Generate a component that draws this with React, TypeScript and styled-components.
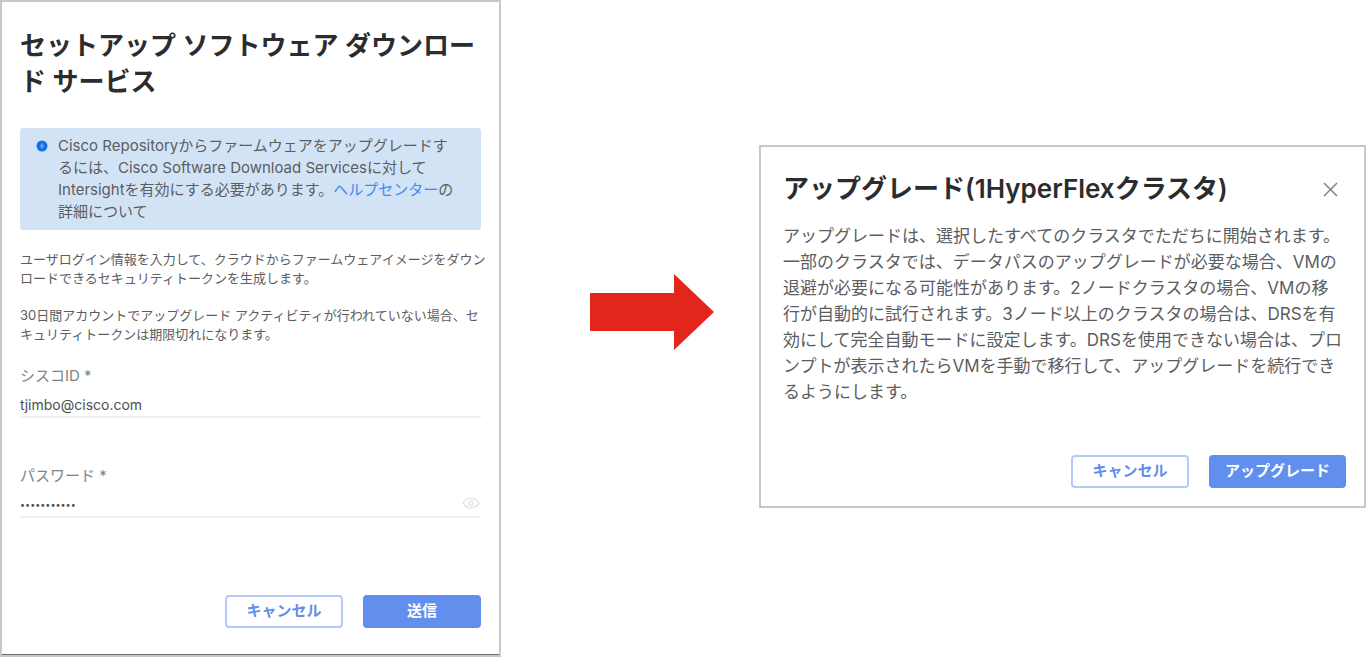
import React from "react";
import styled, { createGlobalStyle, css } from "styled-components";

const GlobalStyle = createGlobalStyle`
  *, *::before, *::after { box-sizing: border-box; }
  body {
    margin: 0;
    background: #fff;
    color: #5c5d5f;
    font-family: Inter, "Noto Sans CJK JP", sans-serif;
  }
  h2, p { margin: 0; }
`;

const Page = styled.main`
  display: grid;
  grid-template-columns: minmax(0, 501fr) minmax(0, 258fr) minmax(0, 607fr);
  align-items: start;
`;

const Card = styled.section`
  border: 2px solid #c8c8c8;
  background: #fff;
`;

const SetupCard = styled(Card)`
  padding: 26px 18px 27px;
  box-shadow: inset 0 -1px 0 #6b6b6b;
`;

const UpgradeCard = styled(Card)`
  margin-top: 145px;
  padding: 24px 18px 18px 22px;
`;

const Title = styled.h2`
  color: #2b2c2e;
  font-size: 26px;
  line-height: 36px;
  font-weight: 600;
  white-space: nowrap;
`;

const TitleRow = styled.div`
  display: flex;
  align-items: center;
  justify-content: space-between;
`;

const CloseButton = styled.button`
  display: flex;
  padding: 8px;
  border: 0;
  background: none;
  color: #808285;
`;

const Notice = styled.div`
  display: flex;
  gap: 10px;
  margin-top: 28px;
  padding: 7px 16px;
  border-radius: 3px;
  background: #d3e3f6;
  font-size: 15px;
  line-height: 22px;
  white-space: nowrap;
`;

const InfoIcon = styled.svg`
  flex: none;
  margin-top: 5px;
`;

const HelpLink = styled.a`
  color: #448ae8;
  text-decoration: none;
`;

const Copy = styled.p`
  margin-top: 18px;
  font-size: 13px;
  line-height: 19px;
  white-space: nowrap;

  ${Notice} + & { margin-top: 20px; }
`;

const Body = styled.p`
  margin-top: 16px;
  font-size: 17px;
  line-height: 26px;
  white-space: nowrap;
`;

const Field = styled.div`
  display: flex;
  flex-direction: column;
  margin-top: 20px;

  & + & { margin-top: 46px; }
`;

const Label = styled.label`
  color: #808285;
  font-size: 15px;
  line-height: 24px;
`;

const InputRow = styled.div`
  display: flex;
  align-items: flex-end;
  height: 30px;
  border-bottom: 2px solid #f0f0f0;
`;

const Input = styled.input`
  flex: 1;
  min-width: 0;
  height: 24px;
  padding: 0;
  border: 0;
  outline: 0;
  background: none;
  color: #4d4e50;
  font: ${(p) => (p.type === "password" ? "9px" : "14px")} Inter, "Noto Sans CJK JP", sans-serif;
`;

const RevealButton = styled.button`
  display: flex;
  padding: 0 1px 7px;
  border: 0;
  background: none;
  color: #e6e6e6;
`;

const Actions = styled.div<{ $gap: number }>`
  display: flex;
  justify-content: flex-end;
  gap: 20px;
  margin-top: ${(p) => p.$gap}px;
`;

const Button = styled.button<{ $primary?: boolean }>`
  min-width: 118px;
  height: 33px;
  padding: 0 14px 2px;
  border: 2px solid #b4cbfa;
  border-radius: 4px;
  background: #fff;
  color: #5f8eee;
  font: 700 15px/22px Inter, "Noto Sans CJK JP", sans-serif;
  white-space: nowrap;
  ${(p) =>
    p.$primary &&
    css`
      border-color: #5f8eee;
      background: #628fee;
      color: #fff;
    `}
`;

const Arrow = styled.svg`
  margin: 274px 0 0 44px;
  justify-self: center;
`;

export default function App() {
  return (
    <>
      <GlobalStyle />
      <Page lang="ja">
        <SetupCard>
          <Title>
            セットアップ ソフトウェア ダウンロー
            <br />ド サービス
          </Title>
          <Notice>
            <InfoIcon width="12" height="12" viewBox="0 0 12 12" aria-hidden="true">
              <circle cx="6" cy="6" r="5.5" fill="#176fe0" />
              <ellipse cx="6" cy="6" rx="1.3" ry="2" fill="#4f94ec" stroke="#8dbcf5" strokeWidth=".6" />
            </InfoIcon>
            <p>
              Cisco Repositoryからファームウェアをアップグレードす
              <br />るには、Cisco Software Download Servicesに対して
              <br />Intersightを有効にする必要があります。<HelpLink href="#help">ヘルプセンター</HelpLink>の
              <br />詳細について
            </p>
          </Notice>
          <Copy>
            ユーザログイン情報を入力して、クラウドからファームウェアイメージをダウン
            <br />ロードできるセキュリティトークンを生成します。
          </Copy>
          <Copy>
            30日間アカウントでアップグレード アクティビティが行われていない場合、セ
            <br />キュリティトークンは期限切れになります。
          </Copy>
          <Field>
            <Label htmlFor="cisco-id">シスコID *</Label>
            <InputRow>
              <Input id="cisco-id" type="text" defaultValue="tjimbo@cisco.com" />
            </InputRow>
          </Field>
          <Field>
            <Label htmlFor="password">パスワード *</Label>
            <InputRow>
              <Input id="password" type="password" defaultValue="hyperflex01" />
              <RevealButton type="button" aria-label="パスワードを表示">
                <svg width="18" height="12" viewBox="0 0 18 12" fill="none" stroke="currentColor" strokeWidth="1.5">
                  <path d="M1 6C3 2.6 5.700 1.200 9 1.200S15 2.600 17 6C15 9.400 12.300 10.800 9 10.800S3 9.400 1 6Z" />
                  <circle cx="9" cy="6" r="2.300" />
                </svg>
              </RevealButton>
            </InputRow>
          </Field>
          <Actions $gap={77}>
            <Button type="button">キャンセル</Button>
            <Button type="submit" $primary>送信</Button>
          </Actions>
        </SetupCard>

        <Arrow width="124" height="76" viewBox="0 0 124 76" aria-hidden="true">
          <path d="M0 19H84V0L124 38L84 76V57H0Z" fill="#e2261c" />
        </Arrow>

        <UpgradeCard>
          <TitleRow>
            <Title>アップグレード(1HyperFlexクラスタ)</Title>
            <CloseButton type="button" aria-label="閉じる">
              <svg width="15" height="15" viewBox="0 0 15 15" fill="none" stroke="currentColor" strokeWidth="1.5">
                <path d="M1 1L14 14M14 1L1 14" />
              </svg>
            </CloseButton>
          </TitleRow>
          <Body>
            アップグレードは、選択したすべてのクラスタでただちに開始されます。
            <br />一部のクラスタでは、データパスのアップグレードが必要な場合、VMの
            <br />退避が必要になる可能性があります。2ノードクラスタの場合、VMの移
            <br />行が自動的に試行されます。3ノード以上のクラスタの場合は、DRSを有
            <br />効にして完全自動モードに設定します。DRSを使用できない場合は、プロ
            <br />ンプトが表示されたらVMを手動で移行して、アップグレードを続行でき
            <br />るようにします。
          </Body>
          <Actions $gap={50}>
            <Button type="button">キャンセル</Button>
            <Button type="button" $primary>アップグレード</Button>
          </Actions>
        </UpgradeCard>
      </Page>
    </>
  );
}
